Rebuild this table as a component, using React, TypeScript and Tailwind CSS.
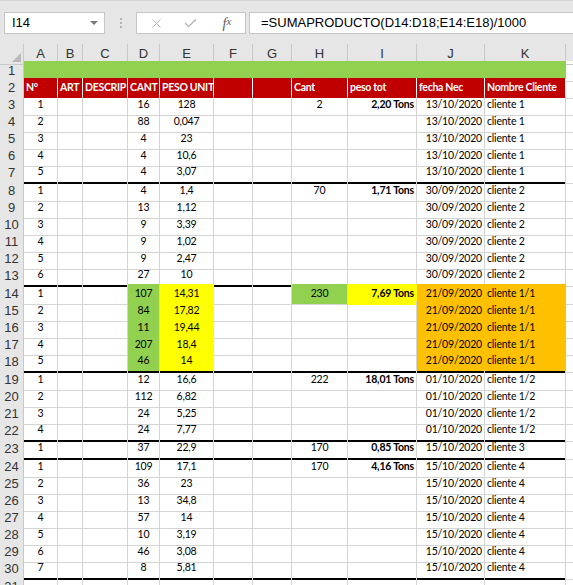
import { X, Check } from 'lucide-react';

type Fill = 'green' | 'yellow' | 'orange' | undefined;

type RowData = {
  n: number;
  a?: string;
  d?: string;
  e?: string;
  h?: string;
  i?: string;
  j?: string;
  k?: string;
  thick?: boolean;
  dFill?: Fill;
  eFill?: Fill;
  hFill?: Fill;
  iFill?: Fill;
  jkFill?: Fill;
};

const grid = 'grid grid-cols-[24px_34px_25px_45px_32px_54px_39px_39px_56px_69px_68px_81px_1fr]';

const fills: Record<string, string> = {
  green: 'bg-[#92d050] border-[#92d050]',
  yellow: 'bg-[#ffff00] border-[#ffff00]',
  orange: 'bg-[#ffc000] border-[#ffc000]',
};

const group = (
  start: number,
  items: [string, string, string][],
  head: { h: string; i: string; j: string; k: string },
  extra: Partial<RowData> = {}
): RowData[] =>
  items.map(([a, d, e], idx) => ({
    n: start + idx,
    a,
    d,
    e,
    h: idx === 0 ? head.h : undefined,
    i: idx === 0 ? head.i : undefined,
    j: head.j,
    k: head.k,
    thick: idx === items.length - 1,
    ...extra,
    hFill: idx === 0 ? extra.hFill : undefined,
    iFill: idx === 0 ? extra.iFill : undefined,
  }));

const rows: RowData[] = [
  ...group(3, [['1', '16', '128'], ['2', '88', '0,047'], ['3', '4', '23'], ['4', '4', '10,6'], ['5', '4', '3,07']],
    { h: '2', i: '2,20 Tons', j: '13/10/2020', k: 'cliente 1' }),
  ...group(8, [['1', '4', '1,4'], ['2', '13', '1,12'], ['3', '9', '3,39'], ['4', '9', '1,02'], ['5', '9', '2,47'], ['6', '27', '10']],
    { h: '70', i: '1,71 Tons', j: '30/09/2020', k: 'cliente 2' }),
  ...group(14, [['1', '107', '14,31'], ['2', '84', '17,82'], ['3', '11', '19,44'], ['4', '207', '18,4'], ['5', '46', '14']],
    { h: '230', i: '7,69 Tons', j: '21/09/2020', k: 'cliente 1/1' },
    { dFill: 'green', eFill: 'yellow', hFill: 'green', iFill: 'yellow', jkFill: 'orange' }),
  ...group(19, [['1', '12', '16,6'], ['2', '112', '6,82'], ['3', '24', '5,25'], ['4', '24', '7,77']],
    { h: '222', i: '18,01 Tons', j: '01/10/2020', k: 'cliente 1/2' }),
  ...group(23, [['1', '37', '22,9']],
    { h: '170', i: '0,85 Tons', j: '15/10/2020', k: 'cliente 3' }),
  ...group(24, [['1', '109', '17,1'], ['2', '36', '23'], ['3', '13', '34,8'], ['4', '57', '14'], ['5', '10', '3,19'], ['6', '46', '3,08'], ['7', '8', '5,81']],
    { h: '170', i: '4,16 Tons', j: '15/10/2020', k: 'cliente 4' }),
];

function Cell({
  children,
  align = 'center',
  bold,
  fill,
  thick,
}: {
  children?: React.ReactNode;
  align?: 'left' | 'center' | 'right';
  bold?: boolean;
  fill?: Fill;
  thick?: boolean;
}) {
  const al = align === 'left' ? 'justify-start pl-[2px]' : align === 'right' ? 'justify-end pr-[2px]' : 'justify-center';
  return (
    <div
      className={`flex items-center overflow-hidden whitespace-nowrap border-r border-b border-[#d4d4d4] ${al} ${
        bold ? 'font-bold' : ''
      } ${fill ? fills[fill] : ''} ${thick ? 'border-b-2 border-b-black' : ''}`}
    >
      {children}
    </div>
  );
}

function RowHead({ n }: { n: number }) {
  return (
    <div className="flex items-center justify-center border-r border-b border-[#c8c8c8] bg-[#e6e6e6] font-['Liberation_Sans',sans-serif] text-[13px] tracking-normal text-[#333]">
      {n}
    </div>
  );
}

export default function App() {
  const letters = ['A', 'B', 'C', 'D', 'E', 'F', 'G', 'H', 'I', 'J', 'K'];
  const heads = ['N°', 'ART', 'DESCRIP', 'CANT', 'PESO UNIT', '', '', 'Cant', 'peso tot', 'fecha Nec', 'Nombre Cliente'];

  return (
    <div className="h-[585px] w-[573px] overflow-hidden bg-white">
      {/* formula bar */}
      <div className="flex h-[44px] items-start gap-0 border-t border-[#d4d4d4] bg-[#e6e6e6] pt-[11px] font-['Liberation_Sans',sans-serif] text-[13px] text-black">
        <div className="ml-[4px] flex h-[22px] w-[101px] items-center justify-between border border-[#c6c6c6] bg-white pl-[7px] pr-[6px]">
          <span>I14</span>
          <span className="h-0 w-0 border-x-[4px] border-t-[4px] border-x-transparent border-t-[#7a7a7a]" />
        </div>
        <div className="flex h-[22px] w-[31px] flex-col items-center justify-center gap-[2px]">
          <span className="h-[2px] w-[2px] bg-[#b4b4b4]" />
          <span className="h-[2px] w-[2px] bg-[#b4b4b4]" />
          <span className="h-[2px] w-[2px] bg-[#b4b4b4]" />
        </div>
        <div className="flex h-[22px] w-[110px] items-center border border-[#c6c6c6] bg-white">
          <div className="flex w-[34px] justify-center pl-[4px]">
            <X size={15} strokeWidth={1.5} color="#b0b0b0" />
          </div>
          <div className="flex w-[38px] justify-center">
            <Check size={15} strokeWidth={2} color="#b0b0b0" />
          </div>
          <div className="flex w-[36px] justify-center font-['Liberation_Serif',serif] text-[14px] italic text-[#5a5a5a]">
            f<span className="text-[11px]">x</span>
          </div>
        </div>
        <div className="ml-[3px] flex h-[22px] flex-1 items-center border border-r-0 border-[#c6c6c6] bg-white pl-[11px]">
          =SUMAPRODUCTO(D14:D18;E14:E18)/1000
        </div>
      </div>

      {/* column headers */}
      <div className={`${grid} h-[17px] bg-[#e6e6e6] font-['Liberation_Sans',sans-serif] text-[13px] text-[#333]`}>
        <div className="relative border-r border-b border-[#c8c8c8]">
          <span className="absolute bottom-[2px] right-[2px] h-0 w-0 border-b-[9px] border-l-[9px] border-b-[#b9b9b9] border-l-transparent" />
        </div>
        {letters.map((l) => (
          <div key={l} className="flex items-center justify-center border-r border-b border-[#c8c8c8]">
            {l}
          </div>
        ))}
        <div className="border-b border-[#c8c8c8]" />
      </div>

      <div className="font-['Lato',sans-serif] text-[10.5px] tracking-[-0.2px] text-black">
        {/* row 1 */}
        <div className={`${grid} h-[17px]`}>
          <RowHead n={1} />
          <div className="col-span-11 border-b border-white bg-[#92d050]" />
          <div className="border-b border-[#d4d4d4]" />
        </div>
        {/* row 2 */}
        <div className={`${grid} h-[17px]`}>
          <RowHead n={2} />
          {heads.map((h, i) => (
            <div
              key={i}
              className="flex items-center overflow-hidden whitespace-nowrap border-r border-b border-white bg-[#c00000] pl-[2px] font-bold tracking-[-0.3px] text-white"
            >
              {h}
            </div>
          ))}
          <div className="border-b border-[#d4d4d4]" />
        </div>

        {rows.map((r) => (
          <div key={r.n} className={`${grid} ${r.thick ? 'h-[18px]' : 'h-[17px]'}`}>
            <RowHead n={r.n} />
            <Cell thick={r.thick}>{r.a}</Cell>
            <Cell thick={r.thick} />
            <Cell thick={r.thick} />
            <Cell thick={r.thick} fill={r.dFill}>{r.d}</Cell>
            <Cell thick={r.thick} fill={r.eFill}>{r.e}</Cell>
            <Cell thick={r.thick} />
            <Cell thick={r.thick} />
            <Cell thick={r.thick} fill={r.hFill}>{r.h}</Cell>
            <Cell thick={r.thick} fill={r.iFill} align="right" bold>{r.i}</Cell>
            <Cell thick={r.thick} fill={r.jkFill} align="right">{r.j}</Cell>
            <Cell thick={r.thick} fill={r.jkFill} align="left">{r.k}</Cell>
            <div className="border-b border-[#d4d4d4]" />
          </div>
        ))}

        {/* row 31 */}
        <div className={`${grid} h-[17px]`}>
          <RowHead n={31} />
          {letters.map((l) => (
            <Cell key={l} />
          ))}
          <div className="border-b border-[#d4d4d4]" />
        </div>
      </div>
    </div>
  );
}
